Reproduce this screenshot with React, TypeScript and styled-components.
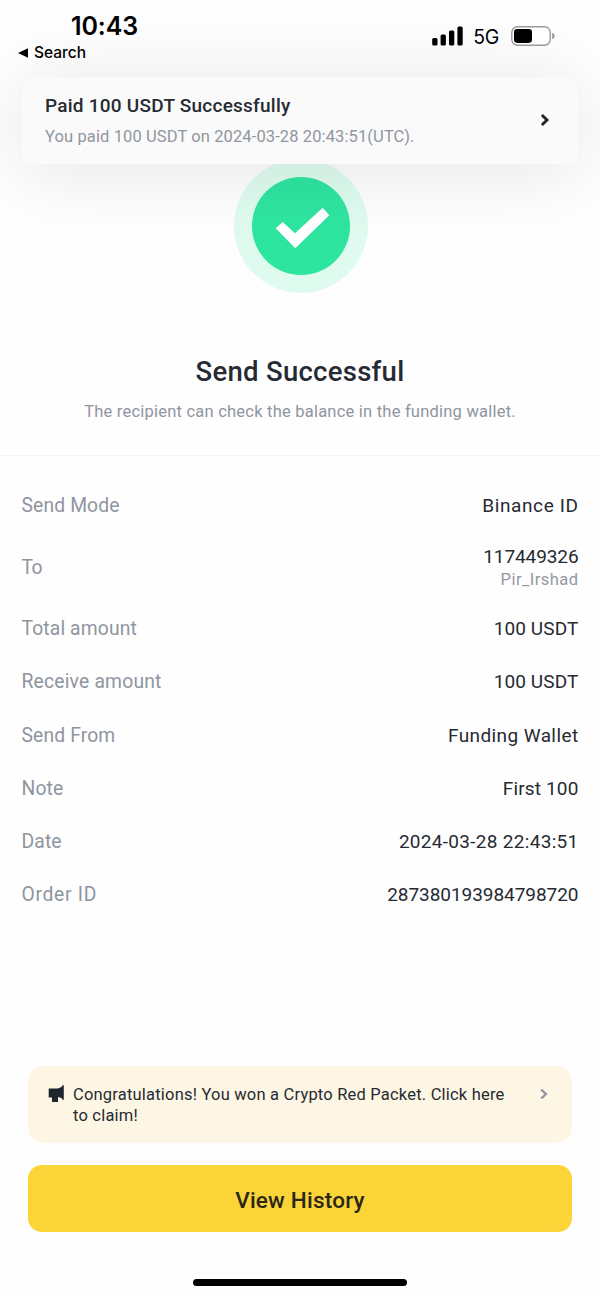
import React from 'react';
import styled, { createGlobalStyle } from 'styled-components';

const GlobalStyle = createGlobalStyle`
  *, *::before, *::after { box-sizing: border-box; }
  body { margin: 0; background: #fefefe; }
`;

const Screen = styled.main`
  position: relative;
  display: flex;
  flex-direction: column;
  width: 600px;
  height: 1297px;
  overflow: hidden;
  background: #fefefe;
  color: #262a32;
  font-family: Roboto, 'Liberation Sans', sans-serif;
`;

const StatusBar = styled.header`
  position: relative;
  z-index: 2;
  display: flex;
  justify-content: space-between;
  height: 77px;
  padding: 10px 45px 0 18px;
  color: #000;
  font-family: Inter, 'Liberation Sans', sans-serif;
`;

const Clock = styled.div`
  padding-left: 53px;
  font-size: 25px;
  font-weight: 600;
  line-height: 32px;
  letter-spacing: -0.1px;
`;

const BackLink = styled.div`
  display: flex;
  align-items: center;
  gap: 5px;
  font-size: 15.5px;
  font-weight: 500;
  line-height: 21px;
`;

const Signals = styled.div`
  display: flex;
  align-items: center;
  height: 32px;
  margin-top: 10px;
  font-size: 19.5px;
  letter-spacing: -0.3px;

  span { margin: 2px 12px 0 9px; }
`;

const Toast = styled.section`
  position: absolute;
  top: 77px;
  left: 22px;
  z-index: 1;
  display: flex;
  align-items: center;
  justify-content: space-between;
  width: 556px;
  height: 87px;
  padding: 0 28px 0 23px;
  border-radius: 10px;
  background: #fafafa;
  box-shadow: 0 6px 80px rgba(0, 0, 0, 0.1);
`;

const ToastTitle = styled.h2`
  margin: 2px 0 0;
  font-size: 19px;
  font-weight: 500;
  line-height: 30px;
  letter-spacing: 0.24px;
`;

const ToastText = styled.p`
  margin: 1px 0 0;
  color: #90969f;
  font-size: 16.5px;
  line-height: 30px;
  letter-spacing: 0.11px;
`;

const ToastArrow = styled.svg`
  margin-bottom: 2px;
`;

const Result = styled.section`
  display: flex;
  flex-direction: column;
  align-items: center;
  height: 379px;
  padding-top: 82px;
  border-bottom: 1px solid #f3f4f5;
`;

const SuccessMark = styled.svg`
  margin-left: 2px;
`;

const Title = styled.h1`
  margin: 59px 0 0;
  font-size: 27.5px;
  font-weight: 500;
  line-height: 40px;
  letter-spacing: 0.28px;
`;

const Subtitle = styled.p`
  margin: 5px 0 0;
  color: #8f959e;
  font-size: 16.5px;
  line-height: 30px;
  letter-spacing: 0.22px;
`;

const Details = styled.dl`
  display: flex;
  flex-direction: column;
  margin: 0;
  padding: 23.5px 21.5px 0;
`;

const Row = styled.div<{ $tall?: boolean }>`
  display: flex;
  align-items: center;
  justify-content: space-between;
  height: ${({ $tall }) => ($tall ? 70 : 53.2)}px;
  font-size: 19px;
`;

const Label = styled.dt<{ $track?: number }>`
  color: #8f959e;
  font-size: 19.3px;
  line-height: 24px;
  letter-spacing: ${({ $track = 0.13 }) => $track}px;
`;

const Value = styled.dd<{ $track?: number; $stacked?: boolean }>`
  margin: 0;
  padding-top: ${({ $stacked }) => ($stacked ? 1.5 : 0)}px;
  text-align: right;
  line-height: 24px;
  letter-spacing: ${({ $track = 0.3 }) => $track}px;
`;

const Secondary = styled.div`
  color: #9399a2;
  font-size: 16.5px;
  line-height: 22px;
  letter-spacing: 0.45px;
`;

const Footer = styled.footer`
  display: flex;
  flex-direction: column;
  align-items: center;
  margin-top: auto;
  padding: 0 28px 11.5px;
`;

const Banner = styled.div`
  display: flex;
  align-items: flex-start;
  width: 100%;
  height: 77px;
  padding: 18px 24px 0 20px;
  border-radius: 15px;
  background: #fdf6e4;

  > svg { flex: none; }
`;

const BannerText = styled.p`
  flex: 1;
  margin: 0 0 0 8px;
  font-size: 16.5px;
  line-height: 21.5px;
  letter-spacing: 0.2px;
`;

const PrimaryButton = styled.button`
  width: 100%;
  height: 67px;
  margin: 22.5px 0 46.5px;
  padding: 2px 0 0;
  border: 0;
  border-radius: 14px;
  background: #fbd437;
  color: #2b2717;
  font: 500 22.5px Roboto, sans-serif;
  letter-spacing: 0.22px;
`;

const HomeIndicator = styled.div`
  width: 214px;
  height: 7px;
  border-radius: 4px;
  background: #000;
`;

type Detail = { label: string; value: string; sub?: string; track?: number; labelTrack?: number };

const details: Detail[] = [
  { label: 'Send Mode', value: 'Binance ID', track: 0.6 },
  { label: 'To', value: '117449326', sub: 'Pir_Irshad', track: -0.1, labelTrack: -0.6 },
  { label: 'Total amount', value: '100 USDT', track: 0.12 },
  { label: 'Receive amount', value: '100 USDT', track: 0.12, labelTrack: 0.2 },
  { label: 'Send From', value: 'Funding Wallet', track: 0.4 },
  { label: 'Note', value: 'First 100', track: 0.15 },
  { label: 'Date', value: '2024-03-28 22:43:51', track: 0.3 },
  { label: 'Order ID', value: '287380193984798720', track: -0.05, labelTrack: 0.7 },
];

export default function App() {
  return (
    <Screen>
      <GlobalStyle />
      <StatusBar>
        <div>
          <Clock>10:43</Clock>
          <BackLink>
            <svg width="11" height="10" viewBox="0 0 11 10"><path d="M0 5 10 .3v9.4z" /></svg>
            Search
          </BackLink>
        </div>
        <Signals>
          <svg width="32" height="20" viewBox="0 0 32 20">
            <rect x="0.2" y="12" width="5.3" height="7.6" rx="1.5" />
            <rect x="8.6" y="8.5" width="5.3" height="11.1" rx="1.5" />
            <rect x="17" y="4.5" width="5.3" height="15.1" rx="1.5" />
            <rect x="25.4" y="0.6" width="5.3" height="19" rx="1.5" />
          </svg>
          <span>5G</span>
          <svg width="44" height="20" viewBox="0 0 44 20">
            <rect x="0.8" y="0.8" width="38.4" height="18.4" rx="5.6" fill="#fff" stroke="#999" strokeWidth="1.4" />
            <rect x="3" y="3.1" width="18" height="13.8" rx="3.3" />
            <path d="M41.2 6.8c3.2.8 3.2 5.6 0 6.4z" fill="#999" />
          </svg>
        </Signals>
      </StatusBar>

      <Toast>
        <div>
          <ToastTitle>Paid 100 USDT Successfully</ToastTitle>
          <ToastText>You paid 100 USDT on 2024-03-28 20:43:51(UTC).</ToastText>
        </div>
        <ToastArrow width="10" height="14" viewBox="0 0 10 14" fill="none" stroke="#22262e" strokeWidth="2.9">
          <path d="M1.9 2 7 7 1.9 12" />
        </ToastArrow>
      </Toast>

      <Result>
        <SuccessMark width="134" height="134" viewBox="0 0 134 134">
          <circle cx="67" cy="67" r="67" fill="#dffbef" />
          <circle cx="67" cy="67" r="49" fill="#2ee5a0" />
          <path d="M41.7 69.3 48.7 63 61 74.3 88.7 48.7 95.3 56.3 61.3 89.3z" fill="#fff" />
        </SuccessMark>
        <Title>Send Successful</Title>
        <Subtitle>The recipient can check the balance in the funding wallet.</Subtitle>
      </Result>

      <Details>
        {details.map(({ label, value, sub, track, labelTrack }) => (
          <Row key={label} $tall={Boolean(sub)}>
            <Label $track={labelTrack}>{label}</Label>
            <Value $track={track} $stacked={Boolean(sub)}>
              {value}
              {sub && <Secondary>{sub}</Secondary>}
            </Value>
          </Row>
        ))}
      </Details>

      <Footer>
        <Banner>
          <svg width="17" height="20" viewBox="0 0 17 20" fill="#1f262f">
            <path d="M.7 4.500h9L13.500 3l1.100-1.700h1.200v14.400h-1.200L13.500 14 10 13v5H4v-4.600H.7z" />
          </svg>
          <BannerText>
            Congratulations! You won a Crypto Red Packet. Click here
            <br />
            to claim!
          </BannerText>
          <svg width="8" height="20" viewBox="0 0 8 20" fill="none" stroke="#8f949c" strokeWidth="2.3">
            <path d="M1.2 5.5 5.9 10 1.2 14.5" />
          </svg>
        </Banner>
        <PrimaryButton>View History</PrimaryButton>
        <HomeIndicator />
      </Footer>
    </Screen>
  );
}
